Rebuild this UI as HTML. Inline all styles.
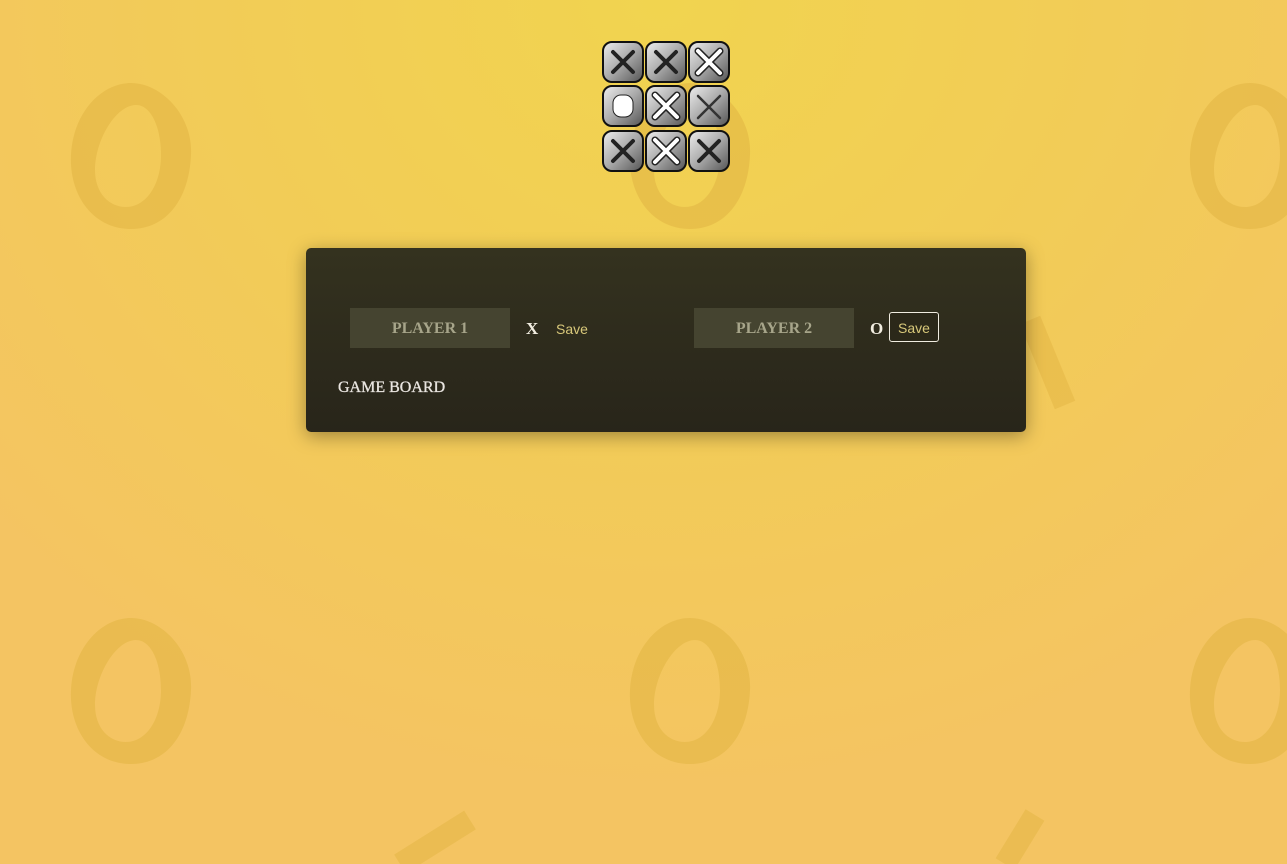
<!DOCTYPE html>
<html><head><style>
html,body{margin:0;padding:0;width:1287px;height:864px;overflow:hidden}
body{background:radial-gradient(ellipse 900px 800px at 660px 0px,#f1d44f 0%,#f2cc57 50%,#f4c462 100%);font-family:"Liberation Serif",serif;position:relative}
svg.bg{position:absolute;left:0;top:0}
.logo{position:absolute;left:601px;top:40px;width:130px;height:138px}
.panel{position:absolute;left:306px;top:248px;width:720px;height:184px;border-radius:5px;background:linear-gradient(#34321f,#28251a);box-shadow:0 4px 18px rgba(0,0,0,.35)}
.inp{position:absolute;top:60px;width:160px;height:40px;background:#454430;color:#a7a58a;font-weight:bold;font-size:16px;text-align:center;line-height:41px}
.sym{position:absolute;top:60px;line-height:40px;color:#f1ede0;font-weight:bold;font-size:17px}
.save{position:absolute;font-family:"Liberation Sans",sans-serif;font-size:14px;color:#d8c87a}
.gb{position:absolute;left:32px;top:131px;color:#e9e5e0;font-size:16px;-webkit-text-stroke:.3px #e9e5e0}
</style></head><body>
<svg class="bg" width="1287" height="864">
<defs>
<path id="o" d="M0 -72 C30 -72 62 -40 60 0 C58 45 35 74 0 74 C-38 74 -62 40 -60 0 C-58 -42 -30 -72 0 -72 Z M5 -50 C-15 -50 -36 -15 -36 15 C-36 38 -22 52 -5 52 C15 52 30 30 30 0 C30 -28 20 -50 5 -50 Z" fill="#e3b645" fill-opacity=".6" fill-rule="evenodd"/>
</defs>
<use href="#o" x="131" y="155"/>
<use href="#o" x="690" y="155"/>
<use href="#o" x="1250" y="155"/>
<use href="#o" x="131" y="690"/>
<use href="#o" x="690" y="690"/>
<use href="#o" x="1250" y="690"/>
<g fill="none" stroke="#e3b645" stroke-opacity=".55" stroke-width="22">
<path d="M400 864 L470 820 M1005 864 L1035 815 M1030 320 L1065 405"/>
</g>
</svg>
<svg class="logo" viewBox="0 0 130 138">
<defs><linearGradient id="g" x1="0" y1="0" x2="1" y2="1"><stop offset="0" stop-color="#eee"/><stop offset=".5" stop-color="#aaa"/><stop offset="1" stop-color="#555"/></linearGradient></defs>
<g stroke="#111" stroke-width="2">
<rect x="2" y="2" width="40" height="40" rx="9" fill="url(#g)"/>
<rect x="45" y="2" width="40" height="40" rx="9" fill="url(#g)"/>
<rect x="88" y="2" width="40" height="40" rx="9" fill="url(#g)"/>
<rect x="2" y="46" width="40" height="40" rx="9" fill="url(#g)"/>
<rect x="45" y="46" width="40" height="40" rx="9" fill="url(#g)"/>
<rect x="88" y="46" width="40" height="40" rx="9" fill="url(#g)"/>
<rect x="2" y="91" width="40" height="40" rx="9" fill="url(#g)"/>
<rect x="45" y="91" width="40" height="40" rx="9" fill="url(#g)"/>
<rect x="88" y="91" width="40" height="40" rx="9" fill="url(#g)"/>
</g>
<g stroke="#222" stroke-width="4" stroke-linecap="round">
<path d="M12 12L32 32M32 12L12 32"/>
<path d="M55 12L75 32M75 12L55 32"/>
<path d="M12 101L32 121M32 101L12 121"/>
<path d="M98 101L118 121M118 101L98 121"/>
</g>
<g stroke="#333" stroke-width="2.5" stroke-linecap="round"><path d="M97 56L119 78M119 56L97 78"/></g>
<g stroke="#222" stroke-width="7" stroke-linecap="round"><path d="M97 11L119 33M119 11L97 33M54 55L76 77M76 55L54 77M54 100L76 122M76 100L54 122"/></g>
<g stroke="#fff" stroke-width="4" stroke-linecap="round"><path d="M97 11L119 33M119 11L97 33M54 55L76 77M76 55L54 77M54 100L76 122M76 100L54 122"/></g>
<rect x="12" y="55" width="20" height="22" rx="8" fill="#fff" stroke="#222"/>
</svg>
<div class="panel">
<div class="inp" style="left:44px">PLAYER 1</div>
<div class="sym" style="left:220px;top:61px">X</div>
<div class="save" style="left:250px;top:73px">Save</div>
<div class="inp" style="left:388px">PLAYER 2</div>
<div class="sym" style="left:564px;top:61px">O</div>
<div class="save" style="left:583px;top:64px;width:48px;height:28px;border:1.5px solid #f0ece0;border-radius:3px;line-height:30px;text-align:center;background:#2b2819">Save</div>
<div class="gb">GAME BOARD</div>
</div>
</body></html>
